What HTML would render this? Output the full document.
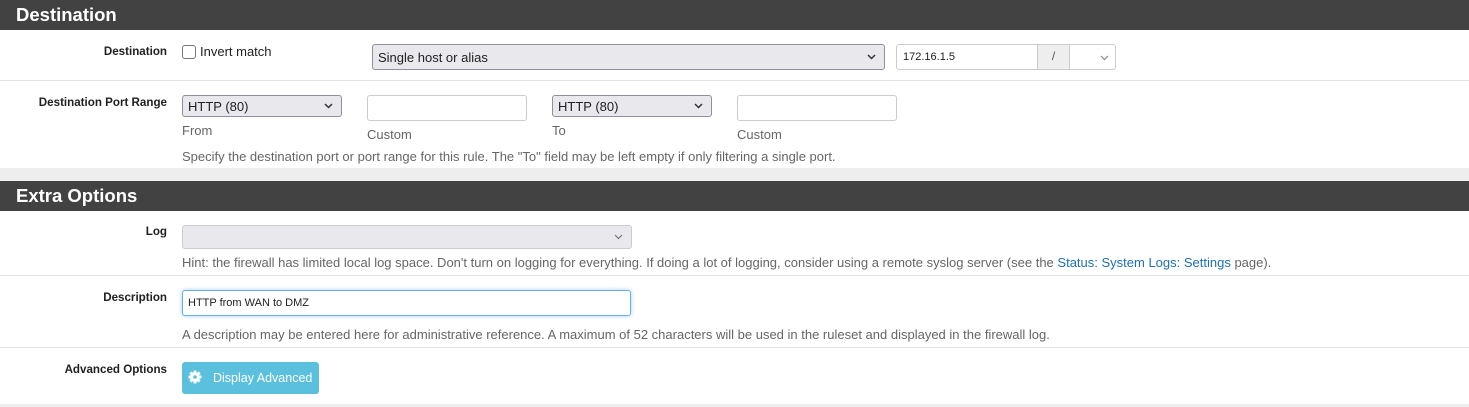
<!DOCTYPE html>
<html><head><style>
body{margin:0;width:1469px;height:407px;background:#eee;font-family:"Liberation Sans",sans-serif;font-size:12px;color:#212121;position:relative;overflow:hidden}
.a{position:absolute;box-sizing:border-box}
.hd{background:#424242;color:#fff;font-weight:bold;font-size:18.5px;left:0;width:1469px;height:30px;padding:4px 0 0 16px}
.bd{background:#fff;left:0;width:1469px}
.lb{font-weight:bold;font-size:11.6px;text-align:right;width:167px;left:0}
.sel{background:#e9e9ed;border:1px solid #8f8f9d;border-radius:3px;padding:3px 5px;font-size:13px}
.inp{background:#fff;border:1px solid #ccc;border-radius:3px}
.hl{color:#666;font-size:13px;letter-spacing:0;white-space:nowrap}
.ln{left:0;width:1469px;height:1px;background:#e5e5e5}
.ar{position:absolute;right:8px;top:50%;margin-top:-3px}
</style></head><body>
<div class="a hd" style="top:0">Destination</div>
<div class="a bd" style="top:30px;height:138px"></div>
<div class="a lb" style="top:45px">Destination</div>
<div class="a" style="left:182px;top:45px;width:14px;height:14px;border:1px solid #767676;border-radius:3px;background:#fff"></div>
<div class="a" style="left:200px;top:44px;font-size:13px">Invert match</div>
<div class="a sel" style="left:372px;top:44px;width:513px;height:26px;padding-top:5px">Single host or alias<svg class="ar" width="9" height="6" viewBox="0 0 9 6"><path d="M1 1l3.5 3.5L8 1" stroke="#333" stroke-width="1.5" fill="none"/></svg></div>
<div class="a inp" style="left:896px;top:44px;width:220px;height:26px"></div>
<div class="a" style="left:903px;top:51px;font-size:11px">172.16.1.5</div>
<div class="a" style="left:1037px;top:45px;width:33px;height:24px;background:#eee;border-left:1px solid #ccc;border-right:1px solid #ccc;text-align:center;padding-top:4px;color:#555">/</div>
<svg class="a" style="left:1100px;top:55px" width="9" height="6" viewBox="0 0 9 6"><path d="M1 1l3.5 3.5L8 1" stroke="#888" stroke-width="1.2" fill="none"/></svg>
<div class="a ln" style="top:80px"></div>
<div class="a lb" style="top:96px">Destination Port Range</div>
<div class="a sel" style="left:182px;top:95px;width:160px;height:22px">HTTP (80)<svg class="ar" width="9" height="6" viewBox="0 0 9 6"><path d="M1 1l3.5 3.5L8 1" stroke="#333" stroke-width="1.5" fill="none"/></svg></div>
<div class="a inp" style="left:367px;top:95px;width:160px;height:26px"></div>
<div class="a sel" style="left:552px;top:95px;width:160px;height:22px">HTTP (80)<svg class="ar" width="9" height="6" viewBox="0 0 9 6"><path d="M1 1l3.5 3.5L8 1" stroke="#333" stroke-width="1.5" fill="none"/></svg></div>
<div class="a inp" style="left:737px;top:95px;width:160px;height:26px"></div>
<div class="a hl" style="left:182px;top:123px">From</div>
<div class="a hl" style="left:367px;top:127px">Custom</div>
<div class="a hl" style="left:552px;top:123px">To</div>
<div class="a hl" style="left:737px;top:127px">Custom</div>
<div class="a hl" style="left:182px;top:149px">Specify the destination port or port range for this rule. The "To" field may be left empty if only filtering a single port.</div>

<div class="a hd" style="top:181px">Extra Options</div>
<div class="a bd" style="top:211px;height:193px"></div>
<div class="a lb" style="top:225px">Log</div>
<div class="a" style="left:182px;top:225px;width:450px;height:24px;background:#e9e9ed;border:1px solid #ccc;border-radius:3px"><svg class="ar" width="9" height="6" viewBox="0 0 9 6"><path d="M1 1l3.5 3.5L8 1" stroke="#777" stroke-width="1.2" fill="none"/></svg></div>
<div class="a hl" style="left:182px;top:255px">Hint: the firewall has limited local log space. Don't turn on logging for everything. If doing a lot of logging, consider using a remote syslog server (see the <span style="color:#1e6fb5">Status: System Logs: Settings</span> page).</div>
<div class="a ln" style="top:275px"></div>
<div class="a lb" style="top:291px">Description</div>
<div class="a" style="left:182px;top:290px;width:449px;height:26px;border:1px solid #66afe9;border-radius:3px;box-shadow:0 0 4px rgba(102,175,233,.6);background:#fff;padding:6px 5px;font-size:11px">HTTP from WAN to DMZ</div>
<div class="a hl" style="left:182px;top:327px">A description may be entered here for administrative reference. A maximum of 52 characters will be used in the ruleset and displayed in the firewall log.</div>
<div class="a ln" style="top:347px"></div>
<div class="a lb" style="top:363px">Advanced Options</div>
<div class="a" style="left:182px;top:362px;width:137px;height:32px;background:#5bc0de;border-radius:3px;color:#fff;font-size:12.5px;padding:9px 0 0 31px;white-space:nowrap">Display Advanced</div>
<svg class="a" style="left:188px;top:370px" width="14" height="14" viewBox="0 0 14 14"><g fill="#fff"><circle cx="7" cy="7" r="4.6"/><rect x="5.5" y="0.5" width="3" height="13" rx="0.5"/><rect x="0.5" y="5.5" width="13" height="3" rx="0.5"/><rect x="5.5" y="0.5" width="3" height="13" rx="0.5" transform="rotate(45 7 7)"/><rect x="5.5" y="0.5" width="3" height="13" rx="0.5" transform="rotate(-45 7 7)"/></g><circle cx="7" cy="7" r="1.8" fill="#5bc0de"/></svg>
</body></html>
